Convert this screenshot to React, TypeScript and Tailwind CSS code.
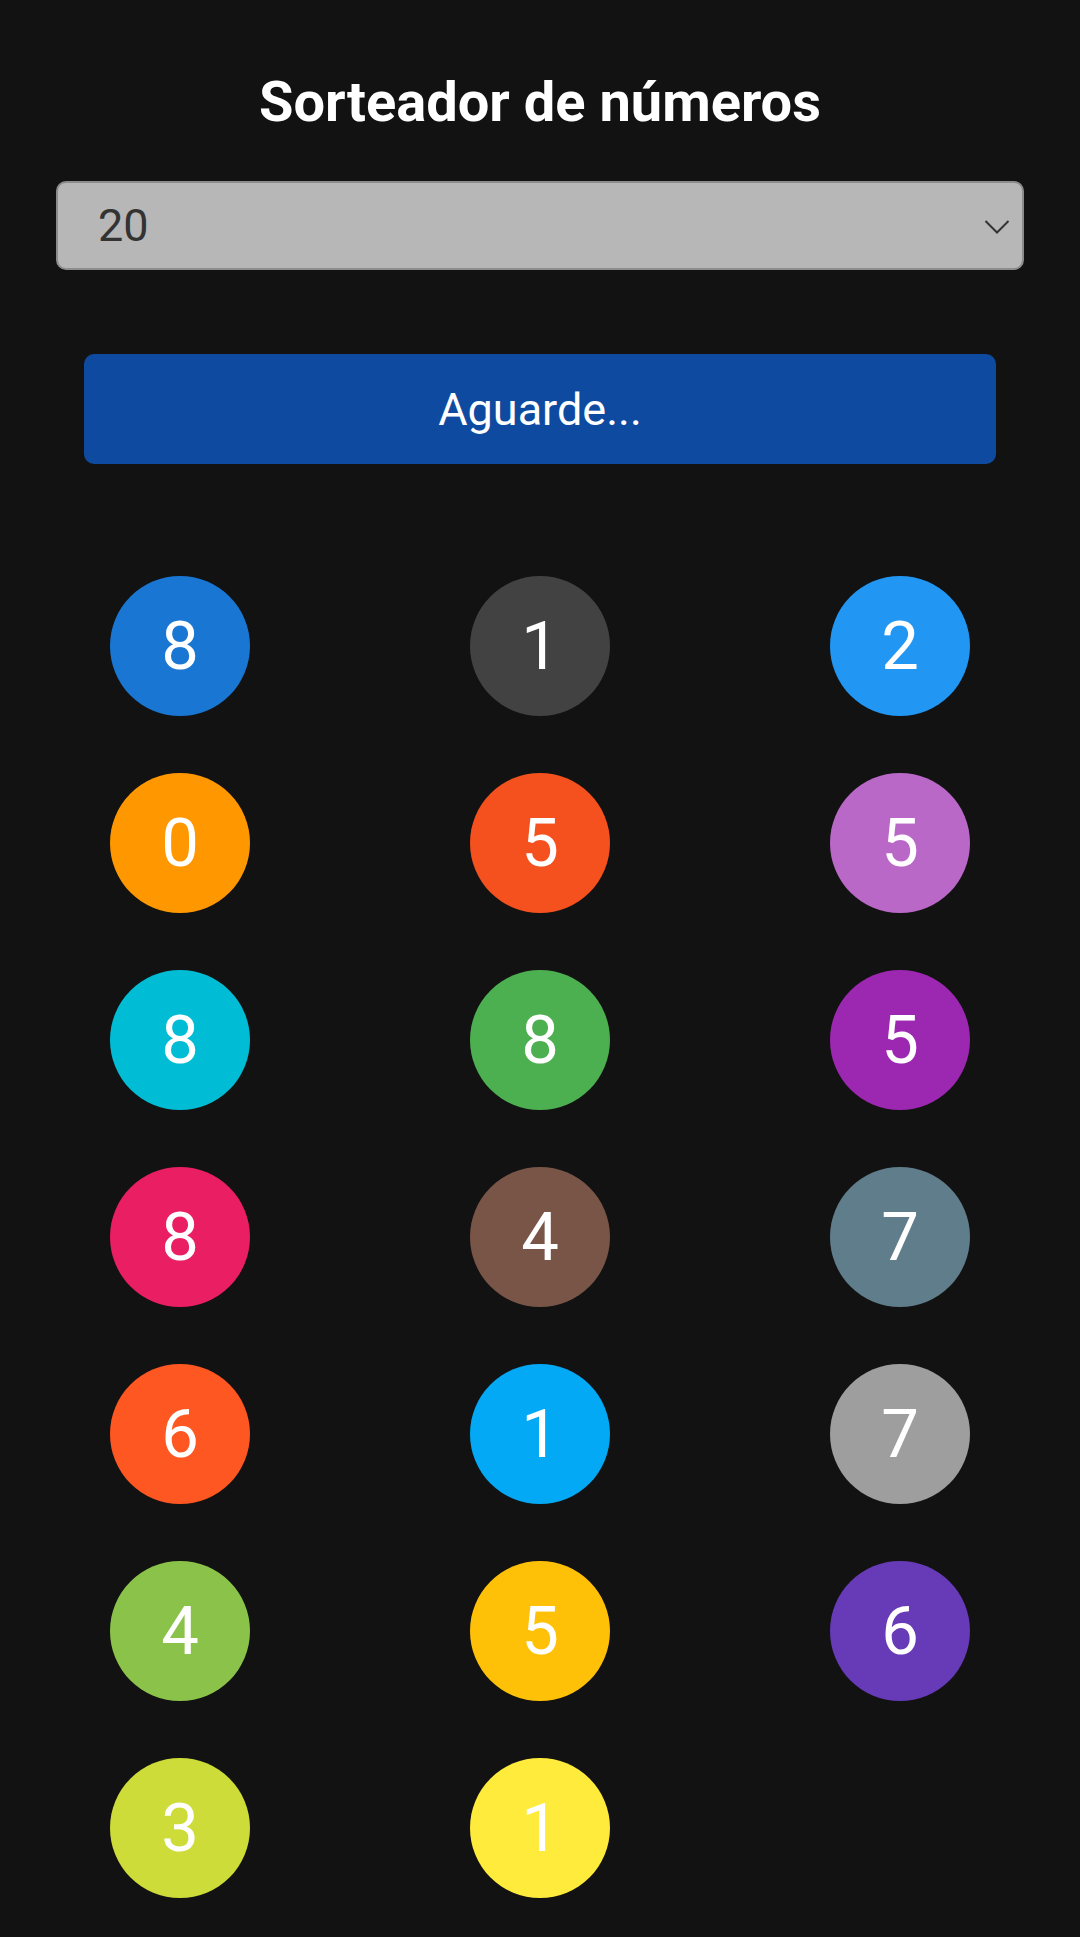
import React from "react";

const balls: { n: number; c: string }[] = [
  { n: 8, c: "bg-[#1976d2]" },
  { n: 1, c: "bg-[#424242]" },
  { n: 2, c: "bg-[#2196f3]" },
  { n: 0, c: "bg-[#ff9800]" },
  { n: 5, c: "bg-[#f4511e]" },
  { n: 5, c: "bg-[#ba68c8]" },
  { n: 8, c: "bg-[#00bcd4]" },
  { n: 8, c: "bg-[#4caf50]" },
  { n: 5, c: "bg-[#9c27b0]" },
  { n: 8, c: "bg-[#e91e63]" },
  { n: 4, c: "bg-[#795548]" },
  { n: 7, c: "bg-[#607d8b]" },
  { n: 6, c: "bg-[#ff5722]" },
  { n: 1, c: "bg-[#03a9f4]" },
  { n: 7, c: "bg-[#9e9e9e]" },
  { n: 4, c: "bg-[#8bc34a]" },
  { n: 5, c: "bg-[#ffc107]" },
  { n: 6, c: "bg-[#673ab7]" },
  { n: 3, c: "bg-[#cddc39]" },
  { n: 1, c: "bg-[#ffeb3b]" },
];

export default function App() {
  return (
    <div
      className="w-[1080px] min-h-[1937px] bg-[#121212] flex flex-col"
      style={{ fontFamily: "Roboto, 'Liberation Sans', sans-serif" }}
    >
      <div className="mt-[62px] h-[80px] flex items-center justify-center">
        <h1 className="text-[56px] leading-none font-bold text-white">Sorteador de números</h1>
      </div>

      <div className="mt-[39px] mx-[56px] h-[89px] rounded-[10px] border-2 border-[#8c8c8c] bg-[#b7b7b7] flex items-center pl-[40px] pr-[12px]">
        <span className="flex-1 text-[45px] leading-none text-[#333333]">20</span>
        <svg width="26" height="16" viewBox="0 0 26 16" className="mt-[2px]">
          <path d="M1.5 2 L13 13.5 L24.5 2" fill="none" stroke="#333333" strokeWidth="2" />
        </svg>
      </div>

      <div className="mt-[84px] mx-[84px] h-[110px] rounded-[10px] bg-[#0f4aa1] flex items-center justify-center">
        <span className="text-[45px] leading-none text-white">Aguarde...</span>
      </div>

      <div className="mt-[112px] grid grid-cols-3 gap-y-[57px]">
        {balls.map((b, i) => (
          <div key={i} className="flex justify-center">
            <div
              className={`w-[140px] h-[140px] rounded-full flex items-center justify-center ${b.c}`}
            >
              <span className="text-[67px] leading-none text-white">{b.n}</span>
            </div>
          </div>
        ))}
      </div>
    </div>
  );
}
